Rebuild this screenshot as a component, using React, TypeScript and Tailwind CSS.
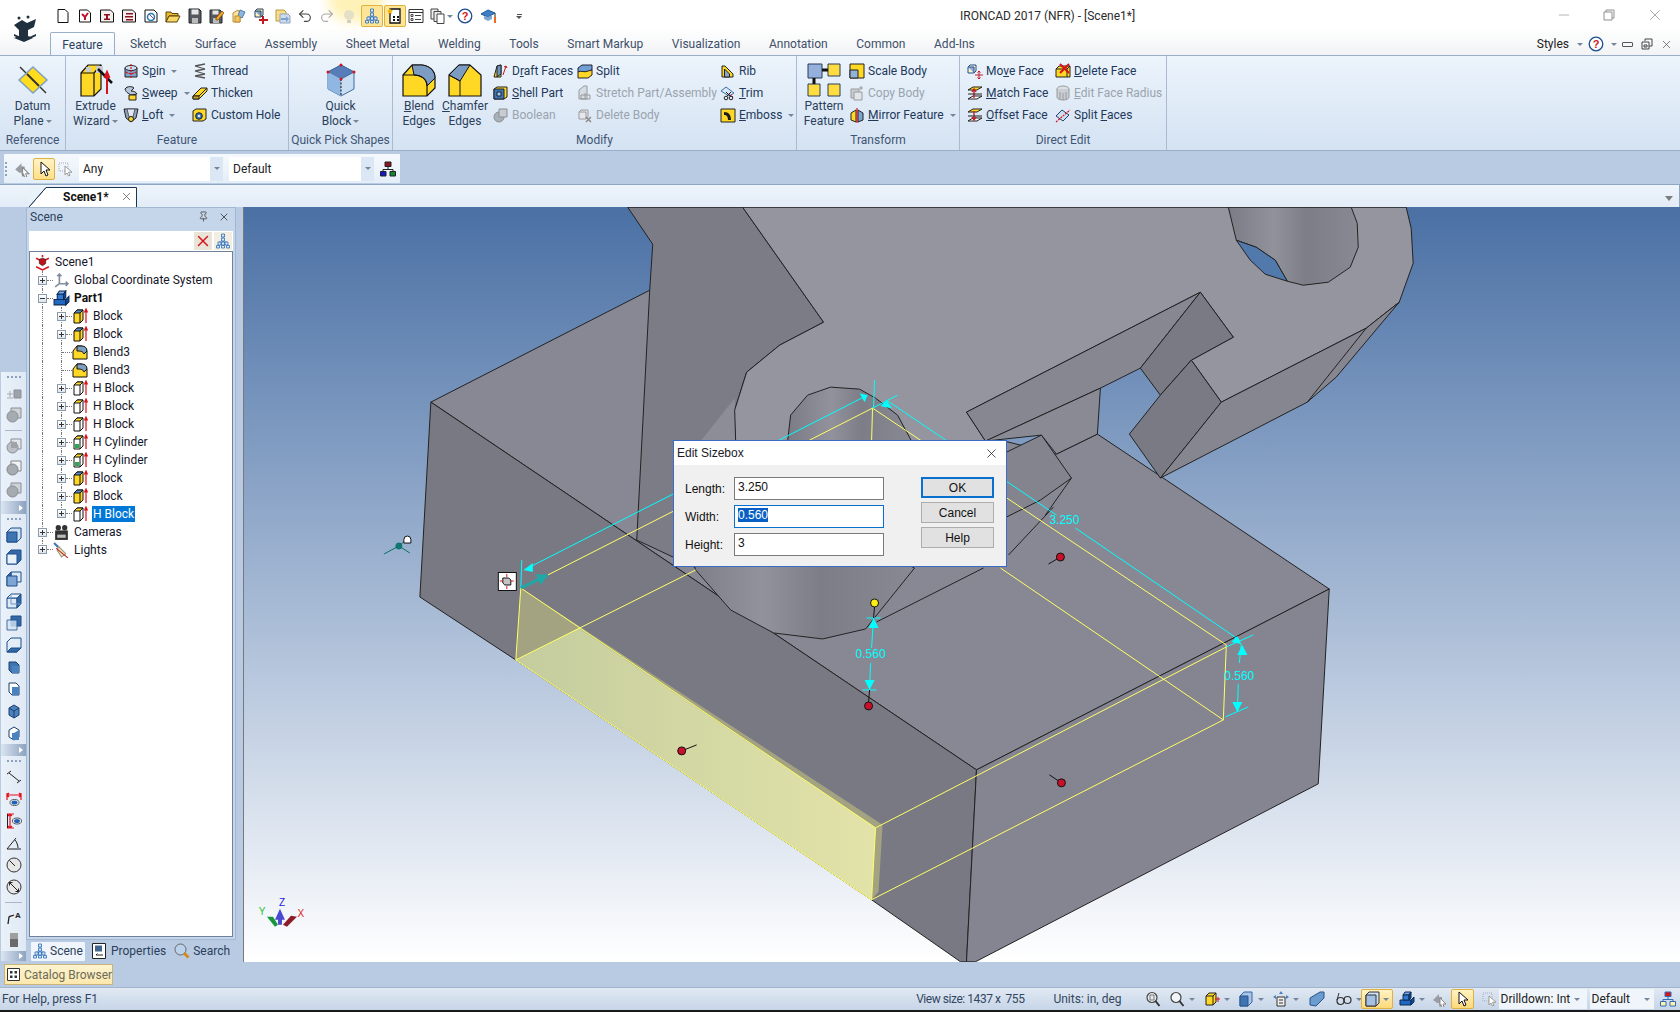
import type { ReactNode } from "react";
import { Undo2, Redo2, X, Pin, Minus } from "lucide-react";

// small helpers
const Tri = ({ c = "border-t-[#76869a]" }: { c?: string }) => (
  <span className={`inline-block h-0 w-0 border-x-[3px] border-t-[3px] border-x-transparent ${c}`} />
);

// "&" marks the access key of a ribbon command
const Mn = ({ t }: { t: string }) => {
  const i = t.indexOf("&");
  if (i < 0) return <>{t}</>;
  return (
    <>
      {t.slice(0, i)}
      <span className="underline">{t[i + 1]}</span>
      {t.slice(i + 2)}
    </>
  );
};

const K = "#111";
const Y = "#ffd826";
const B = "#3f74b2";
const G = "#9a9a9a";

const icons: Record<string, ReactNode> = {
  // quick access
  page: <path d="M3 1.5h7l3 3v10H3z" fill="#fff" stroke={K} />,
  pageArrow: (
    <>
      <path d="M2.5 2h8l3 3v9h-11z" fill="#fff" stroke={K} />
      <path d="M5 6l3 3 3-4M8 12V8" stroke="#c1112b" strokeWidth="2" fill="none" />
    </>
  ),
  pageI: (
    <>
      <path d="M1.5 2h10l3 3v9h-13z" fill="#f4eeee" stroke={K} />
      <path d="M5 6h6v1.500H9v3h2V12H5v-1.500h2v-3H5z" fill="#8c1420" />
    </>
  ),
  pageE: (
    <>
      <path d="M1.500 2h10l3 3v9h-13z" fill="#f4eeee" stroke={K} />
      <path d="M5 5h7v1.500H5zM4 8h8v1.500H4zM5 11h7v1.500H5z" fill="#8c1420" />
    </>
  ),
  pageGlobe: (
    <>
      <path d="M2 2h9l3 3v9H2z" fill="#fff" stroke={K} />
      <circle cx="8" cy="9" r="3.500" fill="none" stroke="#2679b5" strokeWidth="1.500" />
      <path d="M6 6l5 5" stroke="#6a4a8c" />
    </>
  ),
  folder: (
    <>
      <path d="M1 4h5l1 1.500h6V8H4l-3 6z" fill="#e8b836" stroke="#5a4206" />
      <path d="M4 8h11l-3 6H1z" fill="#f7d765" stroke="#5a4206" />
    </>
  ),
  save: (
    <>
      <path d="M2 1h10l2 2v12H2z" fill="#55585e" stroke="#26282c" />
      <path d="M4.500 1.500h7v5h-7z" fill="#e6e6e6" />
      <path d="M5 10h6v5H5z" fill="#bbb" />
    </>
  ),
  saveAs: (
    <>
      <path d="M1 2h10l2 2v11H1z" fill="#55585e" stroke="#26282c" />
      <path d="M3.500 2.500h6v4h-6z" fill="#e6e6e6" />
      <path d="M4 10h6v5H4z" fill="#bbb" />
      <path d="M7 10l6-7 2 2-6 7H7z" fill="#f3a629" stroke="#744a07" strokeWidth=".7" />
    </>
  ),
  swirl: (
    <>
      <path d="M2 5l5-3 2 3v9H2z" fill="#ffe39a" stroke="#b9903a" />
      <path d="M9 2l5 2-3 6-4-2z" fill="#8db7de" stroke="#4b7aa8" />
      <path d="M4 8h5v6H4z" fill="#f5c65c" stroke="#b9903a" />
    </>
  ),
  boxPlus: (
    <>
      <path d="M2 3l2-2h6v6l-2 2H2z" fill="#fff2b0" stroke="#24406b" />
      <path d="M2 3h6v6" fill="#7aa3d4" stroke="#24406b" />
      <path d="M10 8v8M6 12h9" stroke="#c21a22" strokeWidth="2" />
    </>
  ),
  docsArrow: (
    <>
      <path d="M1 2h8l2 2v9H1z" fill="#f8dc86" stroke="#b99a44" />
      <path d="M5 6h8l2 2v7H5z" fill="#cfdcee" stroke="#8ea2be" />
      <path d="M6 10h5V8l3 3-3 3v-2H6z" fill="#7ca3d0" />
    </>
  ),
  bulb: (
    <>
      <circle cx="8" cy="7" r="5" fill="#e4e0c8" />
      <path d="M6 12h4v3H6z" fill="#cfcfc4" />
    </>
  ),
  tree: (
    <>
      <path d="M8 2v3M4 9v3M12 9v3M8 5v7M4 9h8" stroke="#3c78c0" fill="none" strokeWidth=".8" />
      <path d="M6.500 1h3v3h-3zM6.500 5h3v3h-3zM3 9h3v3H3zM6.500 9h3v3h-3zM10 9h3v3h-3zM1.500 12.500h3v2.500h-3zM6.500 12.500h3v2.500h-3zM11.500 12.500h3v2.500h-3z" fill="#d8e8f6" stroke="#2f6db8" strokeWidth=".8" />
    </>
  ),
  bookStar: (
    <>
      <path d="M3 1h10v14H3z" fill="#fff" stroke={K} strokeWidth="1.300" />
      <path d="M6 8h2v2H6zM10 8h2v2h-2zM6 11h2v2H6zM10 11h2v2h-2z" fill={K} />
      <path d="M3 0l1 2 2 .5-1.500 1.500.5 2-2-1-2 1 .5-2L0 2.500 2 2z" fill="#f2b705" />
    </>
  ),
  listBox: (
    <>
      <path d="M1 1.500h14v13H1z" fill="#fff" stroke="#333" />
      <path d="M1 4.500h14" stroke="#333" />
      <path d="M3 6.500h2v2H3zM3 10.500h2v2H3zM7 7.500h6M7 11.500h6" stroke="#444" fill="none" />
    </>
  ),
  copies: (
    <>
      <path d="M1 1h7v10H1z" fill="#eee" stroke="#444" />
      <path d="M4 3.500h7v10H4z" fill="#eee" stroke="#444" />
      <path d="M7 6h7v9.500H7z" fill="#fff" stroke="#444" />
    </>
  ),
  help: (
    <>
      <circle cx="8" cy="8" r="6.800" fill="#fff" stroke="#1d4d95" strokeWidth="1.300" />
      <text x="8" y="12" textAnchor="middle" fontSize="11" fontWeight="700" fill="#d41420" fontFamily="Liberation Sans">?</text>
    </>
  ),
  cap: (
    <>
      <path d="M0 6l7-4 7 3-7 4z" fill="#3d7fc4" stroke="#1e5a98" />
      <path d="M3 8v3l4 2 4-2V7l-4 2z" fill="#7fa8d0" />
      <path d="M14 5v6" stroke="#222" />
      <path d="M13 9h2v6h-2z" fill="#ee6a1f" />
    </>
  ),
  // ribbon, small
  spin: (
    <>
      <path d="M2 5h12v9H2z" fill="#7da2c9" stroke="#222" />
      <ellipse cx="8" cy="5" rx="6" ry="2.500" fill="#cfe0f2" stroke="#222" />
      <path d="M3 9c2 2 8 2 10 0M8 1v14" stroke="#d8121c" fill="none" strokeWidth="1.200" strokeDasharray="2 1" />
    </>
  ),
  sweep: (
    <>
      <path d="M2 4c2-3 7-3 9-1l-3 3c3 0 5 1 6 3l-6 1c-1-1-5-2-6-6z" fill="#b7c6d8" stroke="#222" />
      <path d="M6 10h7v5H6z" fill={Y} stroke="#222" />
    </>
  ),
  loft: (
    <>
      <path d="M1 2h14l-2 9-5 4-5-4z" fill="#8ea3bd" stroke="#222" />
      <path d="M4 2h8l-2 8H6z" fill="#dfe8f3" stroke="#556" />
      <circle cx="8" cy="12" r="2.500" fill={Y} stroke="#222" />
    </>
  ),
  thread: <path d="M3 3l10-2M3 3l10 3M3 8l10-2M3 8l10 3M3 13l10-2M3 13l10 2" stroke="#555" fill="none" strokeWidth="1.300" />,
  thicken: (
    <>
      <path d="M1 11l8-8h6v3l-8 8H1z" fill={Y} stroke="#222" />
      <path d="M1 11h6l8-8" stroke="#222" fill="none" />
      <path d="M1 11h6v3H1z" fill="#c9a418" stroke="#222" />
    </>
  ),
  hole: (
    <>
      <path d="M1 4l3-2h10v10l-3 2H1z" fill={Y} stroke="#222" />
      <circle cx="7" cy="9" r="3.300" fill={B} stroke="#123" />
      <circle cx="7" cy="9" r="1.300" fill="#dfe8f3" />
    </>
  ),
  draft: (
    <>
      <path d="M1 14l3-11 4-1v12z" fill={Y} stroke="#222" />
      <path d="M4 3l4-1v9l-4 3z" fill="#6b95c6" stroke="#222" />
      <path d="M10 12l3-9M13 3l-2 1M13 3l1 2" stroke="#c21a22" fill="none" />
    </>
  ),
  shell: (
    <>
      <path d="M1 4l3-2h10v10l-3 2H1z" fill={Y} stroke="#222" />
      <path d="M1 4h10v10H1z" fill={B} stroke="#222" />
      <path d="M4 7h4v4H4z" fill="#a9c8e8" stroke="#123" />
    </>
  ),
  boolean: (
    <>
      <circle cx="6" cy="10" r="5" fill="#aab0b8" stroke="#8a8f96" />
      <path d="M6 2h8v8H6z" fill="#c7ccd2" stroke="#8a8f96" />
    </>
  ),
  split: (
    <>
      <path d="M1 5l4-3h10v5l-4 2H1z" fill="#6f9fd4" stroke="#223" />
      <path d="M1 9c3-2 6 1 10-1l4-1v5l-4 3H1z" fill={Y} stroke="#223" />
    </>
  ),
  stretch: (
    <>
      <path d="M2 14V5l5-4h3v13z" fill="#d4dce6" stroke={G} />
      <path d="M4 10h9v4H4zM8 8v6" stroke={G} fill="none" />
    </>
  ),
  delBody: (
    <>
      <path d="M2 5l2-2h7v7l-2 2H2z" fill="#e4e8ee" stroke={G} />
      <path d="M2 5h7v7" fill="none" stroke={G} />
      <path d="M9 10l5 5M14 10l-5 5" stroke="#8c8c8c" strokeWidth="1.500" />
    </>
  ),
  rib: (
    <>
      <path d="M2 14V3h3l8 8v3z" fill={Y} stroke="#222" />
      <path d="M4.500 14V6l5 5v3z" fill="#8ba8c8" stroke="#222" />
    </>
  ),
  trim: (
    <>
      <path d="M1 6l5-4 8 6-5 3z" fill="#d9e8f8" stroke="#3a6ea8" />
      <path d="M8 9l5 3" stroke="#c21a22" />
      <circle cx="6" cy="13" r="1.800" fill="none" stroke="#222" />
      <circle cx="11" cy="13" r="1.800" fill="none" stroke="#222" />
      <path d="M7 11l4-4M10 11L6 7" stroke="#222" />
    </>
  ),
  emboss: (
    <>
      <path d="M1 2h14v13H1z" fill={Y} stroke="#222" />
      <path d="M4 5c5 0 7 3 7 8H8c0-3-1-5-4-5z" fill="#1c1c1c" />
    </>
  ),
  scale: (
    <>
      <path d="M1 1h14v14H1z" fill={Y} stroke="#222" />
      <path d="M1 7h8v8H1z" fill="#93b2d8" stroke="#222" />
    </>
  ),
  copyBody: (
    <>
      <path d="M2 4h8v9H2z" fill="#c9ced4" stroke={G} />
      <path d="M5 7h8v8H5z" fill="#e1e4e8" stroke={G} />
      <path d="M12 1v4M10 3h4" stroke={G} />
    </>
  ),
  mirror: (
    <>
      <path d="M7 3L2 6v7l5 2z" fill={Y} stroke="#222" />
      <path d="M9 3l5 3v7l-5 2z" fill="#7aa3d4" stroke="#222" />
      <path d="M8 1v15" stroke="#d8121c" strokeWidth="1.200" />
    </>
  ),
  moveFace: (
    <>
      <path d="M1 4l2-2h6v6L7 10H1z" fill="#fff6c4" stroke="#1d4d95" />
      <path d="M1 4h6v6" fill="#8fb0da" stroke="#1d4d95" />
      <path d="M12 8v8M8 12h8" stroke="#c21a22" />
      <path d="M10.500 9.500L12 8l1.500 1.500M10.500 14.500L12 16l1.500-1.500" stroke="#c21a22" fill="none" />
    </>
  ),
  matchFace: (
    <>
      <path d="M1 5l5-3h9l-5 3z" fill={Y} stroke="#222" />
      <path d="M1 14l5-3h9l-5 3z" fill="#fff" stroke="#222" />
      <path d="M7 4v9M5 7l2-3 2 3" stroke="#c21a22" fill="none" strokeWidth="1.300" />
      <path d="M1 9h14" stroke="#222" />
    </>
  ),
  offsetFace: (
    <>
      <path d="M1 5l5-3h9l-5 3z" fill={Y} stroke="#222" />
      <path d="M1 14l5-3h9l-5 3z" fill="#fff" stroke="#222" />
      <path d="M7 4v9M5 10l2 3 2-3" stroke="#c21a22" fill="none" strokeWidth="1.300" />
      <path d="M1 9h14" stroke="#222" />
    </>
  ),
  delFace: (
    <>
      <path d="M1 6l3-3h11v11H1z" fill={Y} stroke="#222" />
      <path d="M1 6h11v8M12 6l3-3" stroke="#222" fill="none" />
      <path d="M5 1l9 9M14 1l-9 9" stroke="#d8121c" strokeWidth="2" />
    </>
  ),
  editRadius: (
    <>
      <ellipse cx="8" cy="4" rx="6" ry="3" fill="#dde1e6" stroke={G} />
      <path d="M2 4v8c0 4 12 4 12 0V4" fill="#c9ced4" stroke={G} />
      <path d="M5 7v7M8 8v7M11 7v7" stroke={G} />
    </>
  ),
  splitFaces: (
    <>
      <path d="M1 9l6-6 7 5-6 6z" fill="#cfdff2" stroke="#24406b" />
      <path d="M1 15L15 3" stroke="#d8121c" strokeWidth="1.200" strokeDasharray="2 1" />
    </>
  ),
  // toolbar
  backArrow: (
    <>
      <path d="M2 9l6-6v3h3v8H8v-2H6z" fill="#9a9ea4" />
      <path d="M9 7l6 6h-3l1 3-2 .5-1-3-1 2z" fill="#fff" stroke="#8a8a8a" />
    </>
  ),
  cursor: <path d="M5 1v12l3-3 2 5 2-1-2-5h4z" fill="#fff" stroke={K} />,
  cursorBox: (
    <>
      <path d="M1 2h9v8H1z" fill="none" stroke="#aab" strokeDasharray="1 1" />
      <path d="M7 5v9l2-2 1.500 3 1.500-.8-1.500-3H14z" fill="#fff" stroke="#999" />
    </>
  ),
  org: (
    <>
      <path d="M8 5v4M3 11V8.500h10V11" stroke="#222" fill="none" />
      <path d="M5 1h6v4.500H5z" fill="#8c1420" stroke="#222" />
      <path d="M.5 10.500h5.500V15H.5z" fill="#1414d8" stroke="#222" />
      <path d="M10 10.500h5.500V15H10z" fill="#10853a" stroke="#222" />
    </>
  ),
  orgY: (
    <>
      <path d="M8 5v4M3 11V8.500h10V11" stroke="#2f6db8" fill="none" />
      <path d="M5 1h6v4.500H5z" fill="#d8121c" stroke="#2f6db8" />
      <path d="M.5 10.500h5.500V15H.5z" fill="#fff2a8" stroke="#2f6db8" />
      <path d="M10 10.500h5.500V15H10z" fill="#fff2a8" stroke="#2f6db8" />
    </>
  ),
  // left bar, grey
  gPlus: (
    <>
      <path d="M8 5h7v8H8z" fill="#9ea3aa" stroke="#8a8f96" />
      <path d="M1 9h6M4 6v6M1 13h6" stroke="#a8acb2" />
    </>
  ),
  gOverlap: (
    <>
      <path d="M5 1h10v10H5z" fill="#cfd3d8" stroke="#8a8f96" />
      <circle cx="6.500" cy="9.500" r="5.500" fill="#a6abb2" stroke="#8a8f96" />
    </>
  ),
  gOverlap2: (
    <>
      <path d="M5 1h10v10H5z" fill="#e3e6ea" stroke="#8a8f96" />
      <circle cx="6.500" cy="9.500" r="5.500" fill="#bcc0c6" stroke="#8a8f96" />
      <path d="M5 4h6v6H5z" fill="#9ea3aa" />
    </>
  ),
  gOverlap3: (
    <>
      <path d="M5 1h10v10H5z" fill="#f0f2f4" stroke="#80858c" />
      <circle cx="6.500" cy="9.500" r="5.500" fill="#a6abb2" stroke="#80858c" />
    </>
  ),
  // views
  v1: (
    <>
      <path d="M1 5l4-4h10v10l-4 4H1z" fill="#cfe0f2" stroke="#1c4f8a" />
      <path d="M1 5h10v10H1z" fill={B} stroke="#1c4f8a" />
    </>
  ),
  v2: (
    <>
      <path d="M1 5l4-4h10v10l-4 4H1z" fill="#3568a6" stroke="#1c4f8a" />
      <path d="M1 5h10v10H1z" fill="#e9f1fa" stroke="#1c4f8a" />
    </>
  ),
  v3: (
    <>
      <path d="M5 1h10v10H5z" fill="#dce9f6" stroke="#1c4f8a" />
      <path d="M1 5l4-4v10l-4 4z" fill="#3568a6" stroke="#1c4f8a" />
      <path d="M1 15V5h10v10z" fill="#7fa6d2" stroke="#1c4f8a" />
    </>
  ),
  v4: (
    <>
      <path d="M1 5h10v10H1z" fill="#dce9f6" stroke="#1c4f8a" />
      <path d="M11 5l4-4v10l-4 4z" fill="#3568a6" stroke="#1c4f8a" />
      <path d="M1 5l4-4h10l-4 4z" fill="#eef4fb" stroke="#1c4f8a" />
      <path d="M5 1v10h10" stroke="#6f94c0" fill="none" />
    </>
  ),
  v5: (
    <>
      <path d="M5 1h10v10H5z" fill="#3568a6" stroke="#1c4f8a" />
      <path d="M1 5h10v10H1z" fill="#d4e4f4" stroke="#1c4f8a" opacity=".8" />
    </>
  ),
  v6: (
    <>
      <path d="M1 5l4-4h10v10l-4 4H1z" fill="#e2edf8" stroke="#1c4f8a" />
      <path d="M1 15l4-4h10l-4 4z" fill="#3568a6" stroke="#1c4f8a" />
    </>
  ),
  c1: (
    <>
      <path d="M3 3h7l3 3v8H6l-3-3z" fill="#3f74b2" stroke="#1c3f6b" />
      <path d="M6 7h7v7H6z" fill="#4a82c0" />
    </>
  ),
  c2: (
    <>
      <path d="M3 2h7l3 3v9H6l-3-3z" fill="#fff" stroke="#1c3f6b" />
      <path d="M6 6h7v8H6z" fill="#4a82c0" />
    </>
  ),
  c3: (
    <>
      <path d="M3 5l5-3 5 3v7l-5 3-5-3z" fill="#4a82c0" stroke="#1c3f6b" />
      <path d="M3 5l5 3 5-3M8 8v7" stroke="#1c3f6b" fill="none" />
    </>
  ),
  c4: (
    <>
      <path d="M3 5l5-3 5 3v7l-5 3-5-3z" fill="#fff" stroke="#1c3f6b" />
      <path d="M8 8l5-3v7l-5 3z" fill="#4a82c0" />
      <path d="M6 8h7v7H6z" fill="#4a82c0" />
    </>
  ),
  dim: <path d="M1 5l4-3M11 14l4-3M3 4l10 8" stroke="#222" fill="none" />,
  dimH: (
    <>
      <path d="M1 2v7M15 2v7M1 4h14M1 4l2-2M1 4l2 2M15 4l-2-2M15 4l-2 2" stroke="#e3101c" fill="none" strokeWidth="1.200" />
      <ellipse cx="8.500" cy="11.500" rx="4.500" ry="3" fill="#fff" stroke="#555" />
      <ellipse cx="8.500" cy="11.500" rx="3" ry="2" fill="#1c62b8" />
    </>
  ),
  dimV: (
    <>
      <path d="M1 1h7M1 15h7M4 1v14M4 1L2 3M4 1l2 2M4 15l-2-2M4 15l2-2" stroke="#e3101c" fill="none" strokeWidth="1.200" />
      <path d="M1.500 1v14" stroke="#222" />
      <ellipse cx="11" cy="8" rx="4.500" ry="3" fill="#fff" stroke="#555" />
      <ellipse cx="11" cy="8" rx="3" ry="2" fill="#1c62b8" />
    </>
  ),
  angle: <path d="M1 14h14M1 14l9-11M9 5c2 2 3 6 3 8" stroke="#222" fill="none" />,
  radius: (
    <>
      <circle cx="8" cy="8" r="7" fill="#e6e6e6" stroke="#333" />
      <path d="M3.500 3.500L9 9" stroke="#222" />
    </>
  ),
  diam: (
    <>
      <circle cx="8" cy="8" r="7" fill="#e6e6e6" stroke="#333" />
      <path d="M3.500 3.500l9 9M3.500 3.500v3M3.500 3.500h3M12.500 12.500v-3M12.500 12.500h-3" stroke="#222" fill="none" />
    </>
  ),
  leader: (
    <>
      <path d="M2 14l1-7c1-1 3-1 5-2" stroke="#222" fill="none" strokeWidth="1.300" />
      <text x="9" y="8" fontSize="8" fontWeight="700" fill="#222" fontFamily="Liberation Sans">A</text>
    </>
  ),
  hatch: (
    <>
      <path d="M4 1h8v14H4z" fill="#6a6a6a" />
      <path d="M4 2h8M4 4h8M4 6h8" stroke="#eee" strokeWidth=".8" />
    </>
  ),
  // status bar
  zoomAll: (
    <>
      <circle cx="7" cy="6.500" r="5" fill="#e6ebf0" stroke="#444" strokeWidth="1.200" />
      <path d="M5 4h4v5H5z" fill="none" stroke="#777" />
      <path d="M10.500 10l4 5" stroke="#333" strokeWidth="2" />
    </>
  ),
  zoom: (
    <>
      <circle cx="7" cy="6.500" r="5" fill="#f2f5f8" stroke="#444" strokeWidth="1.200" />
      <path d="M10.500 10l4 5" stroke="#333" strokeWidth="2" />
    </>
  ),
  yCubeRed: (
    <>
      <path d="M2 5l3-3h7v9l-3 3H2z" fill={Y} stroke="#222" />
      <path d="M2 5h7v9M9 5l3-3" stroke="#222" fill="none" />
      <path d="M11 8h5M14 6v5" stroke="#d8121c" />
    </>
  ),
  blueCube: (
    <>
      <path d="M2 5l4-4h8v10l-4 4H2z" fill="#a9c6e6" stroke="#3568a6" />
      <path d="M2 5h8v10H2z" fill={B} stroke="#2a5488" />
    </>
  ),
  netDoc: (
    <>
      <path d="M8 0l2 3H6zM0 6l3-2v4zM16 6l-3-2v4z" fill="#4a82c0" />
      <path d="M4 6h8v9H4z" fill="#eee" stroke="#333" />
      <path d="M6 9h4M6 12h4" stroke="#333" />
    </>
  ),
  wedge: <path d="M1 14V7l10-6h4v6l-8 8z" fill="#6b9ccf" stroke="#2a5488" />,
  glasses: (
    <>
      <circle cx="4.500" cy="10" r="3.500" fill="none" stroke="#333" strokeWidth="1.200" />
      <circle cx="11.500" cy="9" r="3.500" fill="none" stroke="#333" strokeWidth="1.200" />
      <path d="M1 9l2-7M8 9c0-1 0-1 0 0" stroke="#333" fill="none" />
    </>
  ),
  cubePale: (
    <>
      <path d="M1 4l3-3h10v11l-3 3H1z" fill="#cfe0f2" stroke="#333" />
      <path d="M1 4h10v11H1z" fill="#a4c0e2" stroke="#333" />
    </>
  ),
  partBlue: (
    <>
      <path d="M1 9h11v5H1z" fill="#1f69c4" stroke="#0e2a52" />
      <path d="M12 9l3-3v5l-3 3z" fill="#0f4f9d" stroke="#0e2a52" />
      <path d="M4 4l2-3h6l-2 3z" fill="#75a9e6" stroke="#0e2a52" />
      <path d="M4 4h6v5H4z" fill="#2f7ad4" stroke="#0e2a52" />
      <path d="M10 4l2-3v6l-2 2z" fill="#0f4f9d" stroke="#0e2a52" />
    </>
  ),
  // tree
  scene: (
    <>
      <path d="M8 1v2M2 4l4 2M14 4l-4 2M2 12l6 3 6-3" stroke="#d8121c" strokeWidth="1.500" fill="none" />
      <path d="M5 5l3-1 3 1v4l-3 2-3-2z" fill="#c20f1a" stroke="#222" strokeWidth=".6" />
    </>
  ),
  gcs: <path d="M6 2v9l-4 3M6 11h8M4 4l2-2 2 2M12 9l2 2-2 2" stroke="#7f8c9a" fill="none" strokeWidth="1.500" />,
  camera: (
    <>
      <circle cx="5" cy="3.500" r="2.500" fill="#333" />
      <circle cx="11" cy="3.500" r="2.500" fill="#333" />
      <path d="M2 6h12v9H2z" fill="#333" />
      <path d="M4 10h8v3H4z" fill="#bbb" />
    </>
  ),
  lights: (
    <>
      <path d="M1 1l5 5" stroke="#3c78c0" strokeWidth="2" />
      <path d="M5 4l7 7-4 3-4-6z" fill="#f2e9b8" stroke="#998" />
      <path d="M3 6l11 9" stroke="#c21a22" />
    </>
  ),
};

// tree glyphs, drawn with the red arrow beside the block
const BlockIcon = ({ kind }: { kind: string }) => (
  <svg width="18" height="16" viewBox="0 0 18 16" className="shrink-0">
    {kind === "blend" ? (
      <>
        <path d="M1 7l4-5h5l5 5v8H1z" fill={Y} stroke="#111" />
        <path d="M5 2h5c3 0 5 2 5 5l-3 3c-1-3-4-3-7-3z" fill="#7f9fc2" stroke="#111" />
      </>
    ) : (
      <>
        <path d="M2 5l3-3h6v10l-3 3H2z" fill={kind === "block" ? Y : "#fff"} stroke="#111" />
        <path d="M2 5l3-3h6L8 5z" fill={kind === "block" ? "#5d8cc2" : Y} stroke="#111" />
        <path d="M8 5v10" stroke="#111" />
        {kind === "cyl" && <path d="M3 10h4v4H3z" fill="#2ea84f" />}
        <path d="M14 15V2M12.500 4.500L14 1l1.500 3.500" stroke="#d8121c" strokeWidth="1.200" fill="none" />
      </>
    )}
  </svg>
);

const Ic = ({ n, s = 16 }: { n: string; s?: number }) => (
  <svg width={s} height={s} viewBox="0 0 16 16" className="shrink-0">
    {icons[n]}
  </svg>
);

// ribbon parts
const Group = ({ w, label, children }: { w: string; label: string; children: ReactNode }) => (
  <div className={`flex flex-col border-r border-[#a9bad1] ${w}`}>
    <div className="flex flex-1 pt-[4px]">{children}</div>
    <div className="h-[19px] text-center leading-[19px] text-[#3f5573]">{label}</div>
  </div>
);

const Big = ({ w, icon, lines, menu }: { w: string; icon: ReactNode; lines: string[]; menu?: boolean }) => (
  <div className={`flex flex-col items-center ${w}`}>
    <div className="flex h-[39px] items-center">{icon}</div>
    {lines.map((l, i) => (
      <div key={l} className="flex h-[15px] items-center gap-[2px] leading-[15px] text-[#2b3f5c]">
        <span>
          <Mn t={l} />
        </span>
        {menu && i === lines.length - 1 && <Tri />}
      </div>
    ))}
  </div>
);

type Cmd = { i: string; t: string; off?: boolean; menu?: boolean };

const Col = ({ w, items }: { w: string; items: Cmd[] }) => (
  <div className={`flex flex-col ${w}`}>
    {items.map((c) => (
      <div key={c.t} className={`flex h-[22px] items-center gap-[3px] ${c.off ? "text-[#9aa3ae]" : "text-[#22385a]"}`}>
        <Ic n={c.i} />
        <span className="whitespace-nowrap">
          <Mn t={c.t} />
        </span>
        {c.menu && <span className="ml-[3px] flex"><Tri /></span>}
      </div>
    ))}
  </div>
);

const Svg36 = ({ children }: { children: ReactNode }) => (
  <svg width="36" height="36" viewBox="0 0 36 36">
    {children}
  </svg>
);

const Ribbon = () => (
  <div className="flex h-[96px] border-y border-[#9aaec8] bg-gradient-to-b from-[#ecf4fc] to-[#d4e2f2]">
    <Group w="w-[66px]" label="Reference">
      <Big
        w="w-full"
        menu
        lines={["Datum", "Plane"]}
        icon={
          <Svg36>
            <path d="M5 5l26 26" stroke="#333" strokeWidth="1.500" />
            <path d="M18 5l14 13-14 13L4 18z" fill="#ffdc1e" stroke="#7fa0c4" strokeWidth="1.500" />
            <path d="M12 12l12 12" stroke="#333" strokeWidth="2" />
          </Svg36>
        }
      />
    </Group>
    <Group w="w-[223px]" label="Feature">
      <Big
        w="ml-[2px] w-[55px]"
        menu
        lines={["Extrude", "Wizard"]}
        icon={
          <Svg36>
            <path d="M3 11l7-8h13v24l-7 7H3z" fill="#ffd826" stroke="#111" strokeWidth="1.200" />
            <path d="M3 11h13v23M16 11l7-8" fill="none" stroke="#111" strokeWidth="1.200" />
            <path d="M18 4h7v7h-7zM8 5h5v5H8z" fill="#c9ccd0" />
            <path d="M20 7l14 14" stroke="#111" strokeWidth="2.500" />
            <path d="M29 32V12M26.500 16L29 10l2.500 6" stroke="#d8121c" strokeWidth="2" fill="none" />
          </Svg36>
        }
      />
      <Col
        w="w-[69px]"
        items={[
          { i: "spin", t: "S&pin", menu: true },
          { i: "sweep", t: "&Sweep", menu: true },
          { i: "loft", t: "&Loft", menu: true },
        ]}
      />
      <Col
        w="w-[96px]"
        items={[
          { i: "thread", t: "Thread" },
          { i: "thicken", t: "Thicken" },
          { i: "hole", t: "Custom Hole" },
        ]}
      />
    </Group>
    <Group w="w-[104px]" label="Quick Pick Shapes">
      <Big
        w="w-full"
        menu
        lines={["Quick", "Block"]}
        icon={
          <Svg36>
            <path d="M5 10l13-7 13 7v17l-13 7-13-7z" fill="#c9ddf2" stroke="#3c6ba3" />
            <path d="M5 10l13-7 13 7-13 7z" fill="#587cb8" stroke="#3c6ba3" />
            <path d="M5 10v17l13 7V17z" fill="#8fb7e2" />
            <path d="M18 17v17" stroke="#111" strokeDasharray="2 1.500" />
            <circle cx="5" cy="10" r="1.500" fill="#d8121c" />
            <circle cx="18" cy="3" r="1.500" fill="#d8121c" />
            <circle cx="31" cy="10" r="1.500" fill="#d8121c" />
            <circle cx="18" cy="17" r="1.500" fill="#d8121c" />
          </Svg36>
        }
      />
    </Group>
    <Group w="w-[404px]" label="Modify">
      <Big
        w="ml-[3px] w-[46px]"
        lines={["&Blend", "Edges"]}
        icon={
          <Svg36>
            <path d="M2 13L11 3h10c8 1 13 6 13 13v10l-8 8H2z" fill="#ffd826" stroke="#111" strokeWidth="1.200" />
            <path d="M11 3h10c8 1 13 6 13 13l-8 8c0-7-6-11-13-11z" fill="#7d9cc2" stroke="#111" />
            <path d="M2 13h11c7 0 13 4 13 11v10" fill="none" stroke="#111" strokeWidth="1.200" />
          </Svg36>
        }
      />
      <Big
        w="w-[46px]"
        lines={["&Chamfer", "Edges"]}
        icon={
          <Svg36>
            <path d="M2 13L12 3h11l11 10v21H2z" fill="#ffd826" stroke="#111" strokeWidth="1.200" />
            <path d="M2 13L12 3h11l-10 16z" fill="#7d9cc2" stroke="#111" />
            <path d="M13 19l-11-6M13 19v15" stroke="#111" fill="none" />
          </Svg36>
        }
      />
      <div className="w-[5px]" />
      <Col
        w="w-[84px]"
        items={[
          { i: "draft", t: "D&raft Faces" },
          { i: "shell", t: "&Shell Part" },
          { i: "boolean", t: "Boolean", off: true },
        ]}
      />
      <Col
        w="w-[143px]"
        items={[
          { i: "split", t: "Split" },
          { i: "stretch", t: "Stretch Part/Assembly", off: true },
          { i: "delBody", t: "Delete Body", off: true },
        ]}
      />
      <Col
        w="w-[70px]"
        items={[
          { i: "rib", t: "Rib" },
          { i: "trim", t: "&Trim" },
          { i: "emboss", t: "&Emboss", menu: true },
        ]}
      />
    </Group>
    <Group w="w-[163px]" label="Transform">
      <Big
        w="ml-[2px] w-[50px]"
        lines={["Pattern", "Feature"]}
        icon={
          <Svg36>
            <path d="M2 2h14v14H2z" fill="#94b0dc" stroke="#2a3c5a" />
            <path d="M22 2h12v12H22zM2 22h12v12H2zM22 22h12v12H22z" fill="#ffdc40" stroke="#2a3c5a" />
            <path d="M16 8h6M8 16v6" stroke="#111" strokeWidth="3" />
          </Svg36>
        }
      />
      <Col
        w="w-[110px]"
        items={[
          { i: "scale", t: "Scale Body" },
          { i: "copyBody", t: "Copy Body", off: true },
          { i: "mirror", t: "&Mirror Feature", menu: true },
        ]}
      />
    </Group>
    <Group w="w-[207px]" label="Direct Edit">
      <div className="w-[7px]" />
      <Col
        w="w-[88px]"
        items={[
          { i: "moveFace", t: "Mo&ve Face" },
          { i: "matchFace", t: "&Match Face" },
          { i: "offsetFace", t: "&Offset Face" },
        ]}
      />
      <Col
        w="w-[110px]"
        items={[
          { i: "delFace", t: "&Delete Face" },
          { i: "editRadius", t: "&Edit Face Radius", off: true },
          { i: "splitFaces", t: "Split &Faces" },
        ]}
      />
    </Group>
  </div>
);

const quick = ["page", "pageArrow", "pageI", "pageE", "pageGlobe", "folder", "save", "saveAs", "swirl", "boxPlus", "docsArrow"];
const tabs = ["Sketch", "Surface", "Assembly", "Sheet Metal", "Welding", "Tools", "Smart Markup", "Visualization", "Annotation", "Common", "Add-Ins"];

const TitleArea = () => (
  <div className="relative h-[55px] overflow-hidden bg-gradient-to-b from-white via-white to-[#f2f3f5]">
    <div className="absolute left-[328px] top-[-22px] h-[44px] w-[56px] rounded-full bg-[#fff2b8] blur-[6px]" />
    <div className="relative flex h-[32px] items-center">
      <div className="flex w-[52px] shrink-0 justify-center pt-[24px]">
        <svg width="30" height="30" viewBox="0 0 30 30">
          <path d="M3 12l8-5 5 3 9-4-2 8-6 3v6l5 2-9 4-10-4 5-2v-6z" fill="#20303f" />
          <path d="M3 21l11 5 11-5v2l-11 5-11-5z" fill="#20303f" />
          <circle cx="8" cy="5" r="1.500" fill="#20303f" />
          <circle cx="17" cy="4" r="1.500" fill="#20303f" />
        </svg>
      </div>
      <div className="flex items-center gap-[6px] pl-[3px]">
        {quick.map((q) => (
          <Ic key={q} n={q} />
        ))}
        <Undo2 size={16} strokeWidth={1.700} className="text-[#444]" />
        <Redo2 size={16} strokeWidth={1.700} className="text-[#aaa]" />
        <Ic n="bulb" />
        <span className="-ml-[2px] flex h-[22px] w-[22px] items-center justify-center rounded-[2px] border border-[#e0b040] bg-[#fde596]">
          <Ic n="tree" />
        </span>
        <span className="-ml-[5px] flex h-[22px] w-[22px] items-center justify-center rounded-[2px] border border-[#e0b040] bg-[#fde596]">
          <Ic n="bookStar" />
        </span>
        <span className="-ml-[4px] flex"><Ic n="listBox" /></span>
        <span className="flex items-center gap-[1px]">
          <Ic n="copies" />
          <Tri />
        </span>
        <span className="-ml-[2px]"><Ic n="help" /></span>
        <span className="ml-[2px]"><Ic n="cap" /></span>
        <span className="ml-[13px] flex flex-col items-center gap-[1px]">
          <span className="h-px w-[5px] bg-[#555]" />
          <Tri c="border-t-[#555]" />
        </span>
      </div>
      <div className="absolute left-[960px] top-[8px] whitespace-nowrap leading-[16px] text-[#2b2b2b]">IRONCAD 2017 (NFR) - [Scene1*]</div>
      <div className="absolute right-[16px] top-[6px] flex items-center gap-[31px] text-[#8f8f8f]">
        <Minus size={16} strokeWidth={1} />
        <svg width="12" height="12" viewBox="0 0 12 12" fill="none" stroke="currentColor">
          <path d="M3 3V1h8v8H9M1 3h8v8H1z" />
        </svg>
        <X size={18} strokeWidth={1} />
      </div>
    </div>
    <div className="relative flex h-[23px] items-stretch pl-[50px] text-[#3d4f69]">
      <div className="z-10 flex h-[24px] w-[65px] items-center justify-center rounded-t-[2px] border border-b-0 border-[#9aaec8] bg-gradient-to-b from-[#fdfeff] to-[#ecf4fc] text-[#2b3f5c]">
        Feature
      </div>
      <div className="flex items-center gap-[28.6px] pl-[15px]">
        {tabs.map((t) => (
          <span key={t} className="whitespace-nowrap">
            {t}
          </span>
        ))}
      </div>
      <div className="absolute right-[7px] top-[1px] flex h-[22px] items-center text-[#222]">
        <span>Styles</span>
        <span className="ml-[8px] flex"><Tri /></span>
        <span className="ml-[5px]"><Ic n="help" /></span>
        <span className="ml-[7px] flex"><Tri /></span>
        <span className="ml-[5px] h-[5px] w-[11px] rounded-[1px] border border-[#555]" />
        <span className="ml-[8px]">
          <svg width="12" height="12" viewBox="0 0 12 12" fill="none" stroke="#444">
            <path d="M4 3V1h7v7H8M1 4h7v7H1zM3 7h3v2H3z" />
          </svg>
        </span>
        <span className="ml-[7px] text-[#666]"><X size={13} strokeWidth={1.500} /></span>
      </div>
    </div>
  </div>
);

const Grip = ({ col }: { col?: boolean }) => (
  <div className={`flex gap-[2px] ${col ? "flex-col" : ""}`}>
    {[0, 1, 2, 3].map((i) => (
      <span key={i} className="h-[2px] w-[2px] bg-[#8ea2bc]" />
    ))}
  </div>
);

const Combo = ({ text, w }: { text: string; w: string }) => (
  <div className={`flex h-[24px] items-center bg-white pl-[4px] text-[#222] ${w}`}>
    <span className="flex-1">{text}</span>
    <span className="flex h-full w-[13px] items-center justify-center bg-[#dbe7f4]"><Tri /></span>
  </div>
);

const SelectBar = () => (
  <div className="ml-[4px] flex h-[29px] w-[396px] items-center rounded-[1px] bg-gradient-to-b from-[#f5f9fd] to-[#e4eef8] pl-[1px]">
    <Grip col />
    <span className="ml-[6px]"><Ic n="backArrow" s={17} /></span>
    <span className="ml-[3px] flex h-[22px] w-[22px] items-center justify-center rounded-[2px] border border-[#e0b040] bg-gradient-to-b from-[#fff3c4] to-[#fddf87]">
      <Ic n="cursor" />
    </span>
    <span className="ml-[3px]"><Ic n="cursorBox" /></span>
    <span className="w-[5px]" />
    <Combo text="Any" w="w-[144px]" />
    <span className="w-[6px]" />
    <Combo text="Default" w="w-[145px]" />
    <span className="ml-[6px]"><Ic n="org" /></span>
  </div>
);

const DocTabs = () => (
  <div className="mt-px flex h-[23px] items-end border-t border-[#8fa5c1] bg-gradient-to-b from-[#eef4fb] to-[#e2ecf7] pr-[7px] shadow-[inset_-1px_0_0_#8fa5c1]">
    <div className="relative ml-[29px] flex h-[20px] w-[108px] items-center bg-white pb-[1px] pl-[34px] font-bold text-[#111]">
      <svg className="absolute left-0 top-0" width="108" height="20" viewBox="0 0 108 20" fill="none" stroke="#1e3550">
        <path d="M0 20L17 .5h90.500V20" />
        <path d="M0 0h17L0 20z" fill="#e9f1f9" stroke="none" />
        <path d="M0 20L17 .5" />
      </svg>
      <span className="relative">Scene1*</span>
      <span className="absolute right-[4px] text-[#666]"><X size={13} strokeWidth={1.500} /></span>
    </div>
    <span className="ml-auto mb-[6px] flex">
      <span className="inline-block h-0 w-0 border-x-[4px] border-t-[5px] border-x-transparent border-t-[#7c7c7c]" />
    </span>
  </div>
);

const barIcons: (string | null)[][] = [
  ["gPlus", "gOverlap", null, "gOverlap2", "gOverlap3", "gOverlap"],
  ["v1", "v2", "v3", "v4", "v5", "v6", "c1", "c2", "c3", "c4"],
  ["dim", "dimH", "dimV", "angle", "radius", "diam", null, "leader", "hatch"],
];

const SideBars = () => (
  <div className="mt-[165px] w-[26px] shrink-0 pl-px">
    {barIcons.map((g, gi) => (
      <div key={gi}>
        <div className="w-[25px] bg-gradient-to-r from-[#eaf1f9] to-[#dfe9f5]">
          <div className="flex h-[10px] items-center justify-center"><Grip /></div>
          {g.map((n, i) =>
            n ? (
              <div key={i} className="flex h-[22px] items-center justify-center">
                <Ic n={n} />
              </div>
            ) : (
              <div key={i} className="mx-[4px] my-[4px] h-px bg-[#a9b8cb]" />
            )
          )}
        </div>
        <div className={`flex items-center justify-end pr-[3px] bg-gradient-to-r from-[#dbe5f1] to-[#8ea3bf] ${gi === 2 ? "h-[10px]" : gi === 0 ? "h-[13px]" : "h-[12px]"}`}>
          <span className="inline-block h-0 w-0 border-y-[3px] border-l-[4px] border-y-transparent border-l-white" />
        </div>
      </div>
    ))}
  </div>
);

type Row = { t: string; lvl: 0 | 1 | 2; ic: string; exp?: "plus" | "minus"; sel?: boolean; bold?: boolean; last?: boolean };

const rows: Row[] = [
  { t: "Scene1", lvl: 0, ic: "scene" },
  { t: "Global Coordinate System", lvl: 1, ic: "gcs", exp: "plus" },
  { t: "Part1", lvl: 1, ic: "partBlue", exp: "minus", bold: true },
  { t: "Block", lvl: 2, ic: "block", exp: "plus" },
  { t: "Block", lvl: 2, ic: "block", exp: "plus" },
  { t: "Blend3", lvl: 2, ic: "blend" },
  { t: "Blend3", lvl: 2, ic: "blend" },
  { t: "H Block", lvl: 2, ic: "hblock", exp: "plus" },
  { t: "H Block", lvl: 2, ic: "hblock", exp: "plus" },
  { t: "H Block", lvl: 2, ic: "hblock", exp: "plus" },
  { t: "H Cylinder", lvl: 2, ic: "cyl", exp: "plus" },
  { t: "H Cylinder", lvl: 2, ic: "cyl", exp: "plus" },
  { t: "Block", lvl: 2, ic: "block", exp: "plus" },
  { t: "Block", lvl: 2, ic: "block", exp: "plus" },
  { t: "H Block", lvl: 2, ic: "hblock", exp: "plus", sel: true, last: true },
  { t: "Cameras", lvl: 1, ic: "camera", exp: "plus" },
  { t: "Lights", lvl: 1, ic: "lights", exp: "plus", last: true },
];

const Expander = ({ kind }: { kind: "plus" | "minus" }) => (
  <span className="-ml-[5px] flex h-[9px] w-[9px] shrink-0 items-center justify-center border border-[#8c9aaa] bg-gradient-to-b from-white to-[#dfe5ec]">
    <svg width="7" height="7" viewBox="0 0 7 7" stroke="#333">
      <path d="M1 3.500h5" />
      {kind === "plus" && <path d="M3.500 1v5" />}
    </svg>
  </span>
);

const TreeRow = ({ r }: { r: Row }) => {
  const guide = "border-l border-dotted border-[#777]";
  const isBlock = ["block", "blend", "hblock", "cyl"].includes(r.ic);
  return (
    <div className="flex h-[18px] items-stretch whitespace-nowrap">
      {r.lvl === 0 ? (
        <div className="w-[4px]" />
      ) : (
        <div className="w-[12px]" />
      )}
      {r.lvl === 2 && <div className={`w-[19px] ${guide}`} />}
      {r.lvl > 0 && (
        <div className={`flex w-[11px] items-center ${r.last ? "h-[9px] self-start" : ""} ${guide}`}>
          <div className={`flex w-full items-center ${r.last ? "translate-y-[4px]" : ""}`}>
            {r.exp ? <Expander kind={r.exp} /> : null}
            <span className="flex-1 border-t border-dotted border-[#777]" />
          </div>
        </div>
      )}
      <div className="flex w-[20px] shrink-0 items-center">
        {isBlock ? <BlockIcon kind={r.ic === "hblock" ? "hblock" : r.ic} /> : <Ic n={r.ic} s={17} />}
      </div>
      <div className="flex items-center">
        <span className={`px-[1px] leading-[16px] ${r.bold ? "font-bold text-[#111]" : "text-[#15152a]"} ${r.sel ? "bg-[#0078d7] text-white" : ""}`}>{r.t}</span>
      </div>
    </div>
  );
};

const ScenePanel = () => (
  <div className="flex w-[210px] shrink-0 flex-col">
    <div className="flex flex-1 flex-col border border-[#a4b7d0] bg-[#c6d6ea] px-[2px] pb-[2px]">
      <div className="mb-[6px] flex h-[17px] items-center pl-[1px] text-[#2b3f5c]">
        <span className="flex-1">Scene</span>
        <Pin size={11} className="mr-[9px] text-[#555]" />
        <X size={12} className="mr-[3px] text-[#555]" />
      </div>
      <div className="flex h-[20px] items-center justify-end gap-[2px] bg-white pr-[1px]">
        <span className="flex h-[18px] w-[18px] items-center justify-center bg-[#e8e4d8]">
          <X size={18} strokeWidth={2} className="text-[#d8121c]" />
        </span>
        <span className="flex h-[18px] w-[18px] items-center justify-center bg-[#f2efe2]">
          <Ic n="tree" />
        </span>
      </div>
      <div className="flex-1 border border-[#6f829c] bg-white pt-[1px]">
        {rows.map((r, i) => (
          <TreeRow key={i} r={r} />
        ))}
      </div>
    </div>
    <div className="flex h-[22px] items-center pl-[5px] text-[#2b3f5c]">
      <div className="flex h-[19px] w-[54px] items-center gap-[2px] rounded-[1px] bg-[#eff5fb] pl-[1px]">
        <Ic n="tree" />
        Scene
      </div>
      <div className="ml-[7px] flex items-center gap-[4px]">
        <svg width="15" height="16" viewBox="0 0 15 16">
          <path d="M.5.500h13v15H.500z" fill="#fff" stroke="#222" />
          <path d="M3 2.500h7v6H3z" fill="#41658c" />
          <path d="M4 12h7M4 12l1.500-1.500" stroke="#222" fill="none" />
        </svg>
        Properties
      </div>
      <div className="ml-[8px] flex items-center gap-[3px]">
        <svg width="16" height="16" viewBox="0 0 16 16">
          <circle cx="6.500" cy="6.500" r="5.500" fill="#bcd2ec" stroke="#666" />
          <path d="M10 10l4.500 4.500" stroke="#d08a1e" strokeWidth="3" />
        </svg>
        Search
      </div>
    </div>
  </div>
);

// the CAD model, drawn in screen coordinates of the 1680x1012 window
const Model = () => (
  <svg className="block h-full w-full" viewBox="243 207 1437 755">
    <defs>
      <linearGradient id="hub" x1="0" y1="0" x2="1" y2="0">
        <stop offset="0" stopColor="#7b7b86" />
        <stop offset=".35" stopColor="#92929c" />
        <stop offset=".6" stopColor="#7d7d88" />
        <stop offset="1" stopColor="#898993" />
      </linearGradient>
      <linearGradient id="pale" x1="0" y1="0" x2="1" y2="0">
        <stop offset="0" stopColor="#c4cc9e" />
        <stop offset="1" stopColor="#e2e3a8" />
      </linearGradient>
    </defs>
    <g stroke="#222" strokeWidth="1" strokeLinejoin="round">
      {/* base block */}
      <polygon points="430,402 649,290 800,340 1000,440 1056,454 1097,434 1329,589 976,770" fill="#888894" />
      <polygon points="430,402 419,597 515,660 871,900 960,962 966,962 976,770" fill="#797984" />
      <polygon points="976,770 1329,589 1318,784 975,962 966,962" fill="#858591" />
      {/* dark plate */}
      <polygon points="627,207 742,207 823,322 779,345 746,372 734,410 735,441 735,500 700,570 636,540 649,290 652,244" fill="#7c7c87" />
      <polygon points="734,398 735,441 700,441" fill="#8d8d98" stroke="none" />
      {/* back hub */}
      <polygon points="735,441 780,500 914,568 865,629 822,639 773,633 730,610 695,570 680,520" fill="url(#hub)" />
      {/* light plate */}
      <polygon points="742,207 1406,207 1411,228 1413,263 1399,302 1366,328 1221,402 1191,360 1233,337 1200,292 966,412 985,441 735,441 734,410 746,372 779,345 823,322" fill="#95959f" />
      <polygon points="787,441 790,415 807,395 830,387 859,389 875,398 897,415 911,441" fill="url(#hub)" />
      <polygon points="1228,207 1236,240 1256,247 1275,260 1287,281 1303,285 1328,282 1350,267 1358,247 1357,223 1351,207" fill="url(#hub)" />
      <polygon points="1236,240 1256,247 1275,260 1287,281 1265,274 1250,260" fill="#5179ab" />
      {/* slots and ribs */}
      <polygon points="1200,292 966,412 985,441 1100,388 1140,368" fill="#878792" />
      <polygon points="1200,292 1233,337 1191,360 1160,395 1140,368" fill="#7a7a85" />
      <polygon points="1100,388 1097,434 1056,454 1041,435 985,441" fill="#8a8a95" />
      <polygon points="1191,360 1221,402 1160,478 1129,434 1160,395" fill="#7a7a85" />
      <polygon points="1221,402 1366,328 1399,302 1336,377 1307,402 1160,478" fill="#868691" />
      <polyline points="1366,328 1307,402" fill="none" />
      <polygon points="1000,455 1041,435 1071,478 1040,500 1000,520" fill="#84848f" />
      <polyline points="1071,478 1045,515" fill="none" />
      <polyline points="876,622 983,568" fill="none" />
      <polyline points="1008,555 1053,507" fill="none" />
      {/* selected face */}
      <polygon points="520,588 882,825 878,892 871,900 875,828 578,628 515,660" fill="#a3a381" stroke="none" />
      <polygon points="515,660 578,628 875,828 871,900" fill="url(#pale)" stroke="none" />
    </g>
    {/* size box */}
    <g stroke="#ffff66" strokeWidth="1" fill="none">
      <polyline points="515,660 520,588 875,828 871,900 515,660" />
      <polyline points="515,660 695,570" />
      <polyline points="547,575 673,511" />
      <polyline points="872,408 809,440" />
      <polyline points="872,408 1226,645 1223,720 871,900" />
      <polyline points="875,828 1226,647" />
      <polyline points="872,408 871,441" />
      <polyline points="1000,568 1223,720" />
    </g>
    {/* dimensions */}
    <g stroke="#00ffff" strokeWidth="1" fill="none">
      <polyline points="867,395 523,570" />
      <polyline points="886,400 1056,515" />
      <polyline points="1075,528 1239,640" />
      <polyline points="874,380 873,408" />
      <polyline points="897,395 872,408" />
      <polyline points="521,560 520,588" />
      <polyline points="873,618 871,648" />
      <polyline points="870,663 869,690" />
      <polyline points="866,618 880,618" />
      <polyline points="862,690 876,690" />
      <polyline points="1241,644 1239,663" />
      <polyline points="1238,684 1237,712" />
      <polyline points="1226,647 1253,635" />
      <polyline points="1225,717 1248,707" />
    </g>
    <g fill="#00ffff">
      <polygon points="867,395 859,393 864,402" />
      <polygon points="886,400 890,409 879,405" transform="rotate(-10 886 400)" />
      <polygon points="523,570 532,563 532,572" />
      <polygon points="873,618 868,628 878,628" />
      <polygon points="869,690 864,680 874,680" />
      <polygon points="1241,644 1237,636 1231,642" />
      <polygon points="1242,645 1237,655 1247,655" />
      <polygon points="1237,712 1232,702 1242,702" />
    </g>
    <polyline points="520,588 547,575" stroke="#1fa8a8" strokeWidth="3" fill="none" />
    <polygon points="547,575 535,574 540,585" fill="#1fa8a8" />
    <g fill="#00ffff" fontSize="12" fontFamily="Liberation Sans">
      <text x="1064" y="524" textAnchor="middle">3.250</text>
      <text x="870" y="658" textAnchor="middle">0.560</text>
      <text x="1239" y="680" textAnchor="middle">0.560</text>
    </g>
    {/* handles */}
    <g stroke="#111" strokeWidth="1">
      <line x1="874" y1="607" x2="873" y2="618" />
      <line x1="869" y1="690" x2="868" y2="702" />
      <line x1="1060" y1="557" x2="1048" y2="564" />
      <line x1="1061" y1="783" x2="1049" y2="775" />
      <line x1="681" y1="751" x2="696" y2="745" />
      <circle cx="874" cy="603" r="4" fill="#ffee11" />
      <circle cx="868" cy="706" r="4" fill="#c8102a" />
      <circle cx="1060" cy="557" r="4" fill="#c8102a" />
      <circle cx="1061" cy="783" r="4" fill="#c8102a" />
      <circle cx="681" cy="751" r="4" fill="#c8102a" />
    </g>
    <g stroke="#0c6f66" fill="none">
      <polyline points="383,554 398,546 409,553" />
      <circle cx="398" cy="546" r="3" fill="#0c7f75" />
      <line x1="398" y1="546" x2="404" y2="541" />
      <path d="M403 543v-3.500a3.500 3.500 0 0 1 7 0V543z" fill="#fff" stroke="#111" />
    </g>
    <g>
      <rect x="497.500" y="572.500" width="18" height="18" fill="#fff" stroke="#111" />
      <path d="M502 578h6l2 2v5h-6l-2-2z" fill="#c4c4c4" stroke="#111" />
      <path d="M506 574v3M506 586v3M499 581h3M510 581h3" stroke="#d8121c" />
    </g>
    {/* triad */}
    <g>
      <polygon points="279,909 284,920 281,920 281,925 277,925 277,920 274,920" fill="#4a4ad0" />
      <polygon points="290,916 296,917 286,927 282,925" fill="#8c1c28" />
      <polygon points="266,917 272,917 277,925 274,927" fill="#18963a" />
      <text x="281" y="906" textAnchor="middle" fontSize="10" fill="#1a1ae0" fontFamily="Liberation Sans">Z</text>
      <text x="261" y="915" textAnchor="middle" fontSize="10" fill="#28c028" fontFamily="Liberation Sans">Y</text>
      <text x="300" y="917" textAnchor="middle" fontSize="10" fill="#e01a1a" fontFamily="Liberation Sans">X</text>
    </g>
  </svg>
);

const DField = ({ label, value, on }: { label: string; value: string; on?: boolean }) => (
  <div className="flex items-center">
    <span className="w-[60px] pl-[11px] pt-[1px]">{label}</span>
    <div className={`h-[23px] w-[150px] border bg-white pl-[3px] leading-[19px] ${on ? "border-[#0a70d0]" : "border-[#7a7a7a]"}`}>
      {on ? <span className="bg-[#0a5fc4] text-white">{value}</span> : value}
    </div>
  </div>
);

const DBtn = ({ t, on }: { t: string; on?: boolean }) => (
  <div className={`flex h-[21px] w-[73px] items-center justify-center bg-[#e1e1e1] ${on ? "border-2 border-[#0a70d0]" : "border border-[#adadad]"}`}>
    {t}
  </div>
);

const Dialog = () => (
  <div className="absolute left-[429px] top-[233px] flex h-[127px] w-[334px] flex-col border border-[#3a6bc5] bg-[#f0f0f0] text-[12px] text-[#111] [font-family:'Liberation_Sans',sans-serif]">
    <div className="flex h-[24px] items-center justify-between bg-white pl-[3px] pr-[7px] text-[#1a1a2a]">
      <span>Edit Sizebox</span>
      <X size={15} strokeWidth={1.200} />
    </div>
    <div className="flex pt-[12px]">
      <div className="flex flex-col gap-[5px]">
        <DField label="Length:" value="3.250" />
        <DField label="Width:" value="0.560" on />
        <DField label="Height:" value="3" />
      </div>
      <div className="ml-[37px] flex flex-col gap-[4px]">
        <DBtn t="OK" on />
        <DBtn t="Cancel" />
        <DBtn t="Help" />
      </div>
    </div>
  </div>
);

const StatusIcon = ({ n, tri, pad }: { n: string; tri?: boolean; pad?: string }) => (
  <span className={`flex items-center gap-[4px] ${pad ?? ""}`}>
    <Ic n={n} />
    {tri && <Tri />}
  </span>
);

const StatusBar = () => (
  <div className="flex h-[23px] items-center whitespace-nowrap border-t border-[#a3b5cd] bg-gradient-to-b from-[#e1e9f3] to-[#c6d5e8] text-[#33465f]">
    <span className="pl-[2px]">For Help, press F1</span>
    <span className="ml-[818px] tracking-[-0.45px]">View size: 1437 x&nbsp; 755</span>
    <span className="ml-[29px]">Units: in, deg</span>
    <span className="ml-[23px] flex items-center gap-[6px]">
      <Ic n="zoomAll" />
      <StatusIcon n="zoom" tri pad="ml-[2px]" />
      <StatusIcon n="yCubeRed" tri pad="ml-[3px]" />
      <StatusIcon n="blueCube" tri pad="ml-[2px]" />
      <StatusIcon n="netDoc" tri pad="ml-[3px]" />
      <span className="ml-[4px] flex"><Ic n="wedge" /></span>
      <StatusIcon n="glasses" tri pad="ml-[5px]" />
      <span className="-ml-[7px] flex h-[20px] items-center gap-[2px] rounded-[2px] border border-[#e0b040] bg-gradient-to-b from-[#fff3c4] to-[#fdd977] px-[3px]">
        <Ic n="cubePale" />
        <Tri />
      </span>
      <StatusIcon n="partBlue" tri />
      <Ic n="backArrow" />
      <span className="-ml-[2px] flex h-[20px] w-[23px] items-center justify-center rounded-[2px] border border-[#e0b040] bg-gradient-to-b from-[#fff3c4] to-[#fdd977]">
        <Ic n="cursor" />
      </span>
      <span className="ml-[2px] flex"><Ic n="cursorBox" /></span>
    </span>
    <span className="ml-[1px] flex h-[20px] w-[88px] shrink-0 items-center gap-[4px] bg-[#f0f5fb] pl-[2px] text-[#222]">
      Drilldown: Int
      <Tri />
    </span>
    <span className="ml-[3px] flex h-[20px] w-[64px] shrink-0 items-center justify-between bg-[#f0f5fb] pl-[2px] pr-[4px] text-[#222]">
      Default
      <Tri />
    </span>
    <span className="ml-[6px]"><Ic n="orgY" /></span>
  </div>
);

export default function App() {
  return (
    <div className="flex h-[1012px] w-[1680px] flex-col overflow-hidden bg-[#b9cbe3] text-[12px] [font-family:Roboto,sans-serif]">
      <TitleArea />
      <Ribbon />
      <div className="h-[3px] shrink-0" />
      <SelectBar />
      <DocTabs />
      <div className="flex h-[755px] shrink-0">
        <SideBars />
        <ScenePanel />
        <div className="w-[7px] shrink-0" />
        <div className="relative flex-1 overflow-hidden border-l border-[#7a7a7a] bg-gradient-to-b from-[#4a70a4] to-white">
          <Model />
          <Dialog />
        </div>
      </div>
      <div className="flex h-[25px] items-center pl-[4px]">
        <div className="flex h-[21px] w-[109px] items-center gap-[2px] whitespace-nowrap border border-[#c9b57a] bg-gradient-to-b from-[#fdf3cf] to-[#fce8ad] pl-[2px] text-[#6b6b5a]">
          <svg width="15" height="15" viewBox="0 0 15 15" className="shrink-0">
            <path d="M.5 1.500h12v12H.5z" fill="#fff" stroke="#333" />
            <path d="M3 4h2.500v2.500H3zM7.500 4H10v2.500H7.500zM3 8.500h2.500V11H3zM7.500 8.500H10V11H7.500z" fill="#333" />
          </svg>
          Catalog Browser
        </div>
      </div>
      <StatusBar />
      <div className="h-[2px] bg-[#1a1a1a]" />
    </div>
  );
}
